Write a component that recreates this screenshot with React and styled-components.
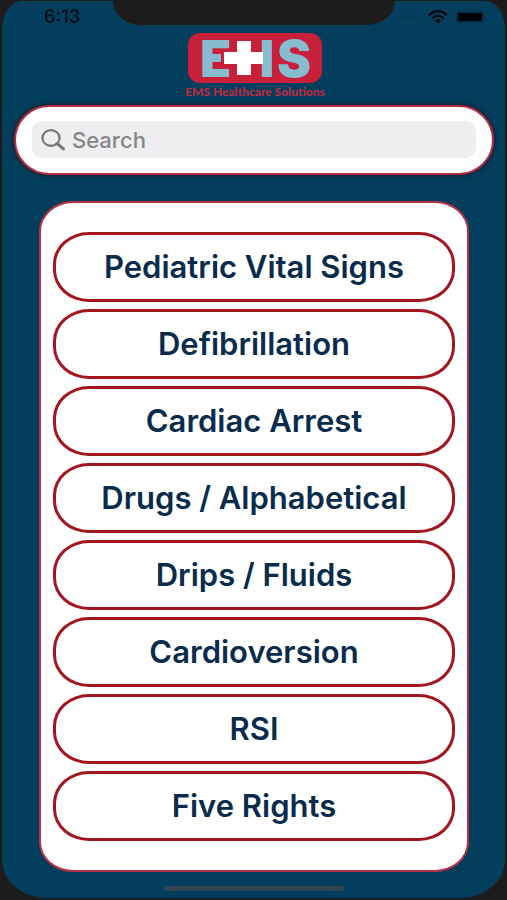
import React, { useState } from "react";
import styled, { createGlobalStyle } from "styled-components";

const MENU = [
  "Pediatric Vital Signs",
  "Defibrillation",
  "Cardiac Arrest",
  "Drugs / Alphabetical",
  "Drips / Fluids",
  "Cardioversion",
  "RSI",
  "Five Rights"
];

const WifiIcon = () => (
  <svg width="20" height="14" viewBox="0 0 20 14" aria-hidden="true">
    <g fill="none" stroke="#02080d" strokeWidth="2.4">
      <path d="M1.2 5.2C6-.2 14-.2 18.8 5.2" />
      <path d="M4.6 8.2c3-3.2 7.8-3.2 10.8 0" />
    </g>
    <path d="M7.2 10.4c1.6-1.5 4-1.5 5.6 0L10 13.4z" fill="#02080d" />
  </svg>
);

const BatteryIcon = () => (
  <svg width="31" height="12" viewBox="0 0 31 12" aria-hidden="true">
    <rect x="0" y="0" width="28" height="12" rx="3" fill="#04304a" />
    <rect x="2" y="2" width="24" height="8" rx="1" fill="#010406" />
    <path d="M29 4v4c1.6-.6 1.6-3.4 0-4z" fill="#04304a" />
  </svg>
);

const SearchIcon = () => (
  <svg width="24" height="22" viewBox="0 0 24 22" aria-hidden="true">
    <g fill="none" stroke="#77777b">
      <ellipse cx="10" cy="9" rx="8.6" ry="7.8" strokeWidth="2.2" />
      <path d="M16 14.5l6.4 5.4" strokeWidth="3" strokeLinecap="round" />
    </g>
  </svg>
);

const Logo = () => (
  <LogoMark viewBox="0 0 134 50" role="img" aria-label="EHS">
    <rect width="134" height="50" rx="12" fill="#c8203a" />
    <g fill="#86bccd" fontFamily="Inter, sans-serif" fontWeight="900" fontSize="51">
      <text x="12" y="44">E</text>
      <text x="48" y="44">H</text>
      <text x="89" y="44">S</text>
    </g>
    <path d="M46 2h19v15h8v16h-8v15H46V34H33V16h13z" fill="#c8203a" />
    <path d="M49 8h14v11h12v12H63v11H49V31H36V19h13z" fill="#fff" />
  </LogoMark>
);

const App = () => {
  const [query, setQuery] = useState("");

  return (
    <>
      <GlobalStyle />
      <Phone>
        <StatusBar>
          <Time>6:13</Time>
          <Notch />
          <StatusIcons>
            <SignalDots>····</SignalDots>
            <WifiIcon />
            <BatteryIcon />
          </StatusIcons>
        </StatusBar>
        <Header>
          <Logo />
          <Tagline>EMS Healthcare Solutions</Tagline>
        </Header>
        <SearchCard>
          <SearchField>
            <SearchIcon />
            <SearchInput
              type="text"
              aria-label="Search"
              placeholder="Search"
              value={query}
              onChange={e => setQuery(e.target.value)}
            />
          </SearchField>
        </SearchCard>
        <MenuPanel>
          {MENU.map(name => (
            <MenuButton key={name} type="button">
              {name}
            </MenuButton>
          ))}
        </MenuPanel>
        <HomeIndicator />
      </Phone>
    </>
  );
};

export default App;

const GlobalStyle = createGlobalStyle`
  * {
    box-sizing: border-box;
  }
  body {
    margin: 0;
    background: #1c1c1d;
    font-family: Inter, "Liberation Sans", sans-serif;
  }
`;

const Phone = styled.div`
  display: flex;
  flex-direction: column;
  margin: 1px 2px 3px;
  padding-bottom: 7px;
  background: #033f5c;
  border-radius: 20px 20px 44px 44px / 28px 28px 38px 38px;
`;

const StatusBar = styled.div`
  display: grid;
  grid-template-columns: 1fr 282px 1fr;
  height: 32px;
`;

const Time = styled.span`
  padding: 6px 0 0 42px;
  font-size: 18px;
  line-height: 20px;
  font-weight: 600;
  color: #02101a;
`;

const Notch = styled.div`
  height: 24px;
  background: #1c1c1d;
  border-radius: 0 0 28px 28px / 0 0 24px 24px;
`;

const StatusIcons = styled.div`
  display: flex;
  align-items: center;
  justify-content: flex-end;
  gap: 8px;
  height: 32px;
  padding-right: 18px;
`;

const SignalDots = styled.span`
  font-size: 16px;
  color: #04304a;
`;

const Header = styled.header`
  display: flex;
  flex-direction: column;
  align-items: center;
  padding-left: 3px;
`;

const LogoMark = styled.svg`
  width: 134px;
  height: 50px;
  overflow: visible;
`;

const Tagline = styled.p`
  margin: 2px 0 6px;
  font-family: Lato, sans-serif;
  font-size: 12px;
  line-height: 14px;
  font-weight: 900;
  color: #b92a42;
`;

const SearchCard = styled.div`
  margin: 0 11px 0 12px;
  padding: 14px 16px 15px;
  background: #fff;
  border: 2px solid #b02a40;
  border-radius: 36px;
  box-shadow: 0 0 5px 1px #1c1b2c;
`;

const SearchField = styled.label`
  display: flex;
  align-items: center;
  gap: 7px;
  height: 37px;
  padding-left: 9px;
  background: #eeeef0;
  border-radius: 10px;
`;

const SearchInput = styled.input`
  flex: 1;
  min-width: 0;
  padding: 0;
  border: none;
  outline: none;
  background: transparent;
  font-family: inherit;
  font-size: 22px;
  line-height: 28px;
  font-weight: 500;
  color: #3c3c43;
  &::placeholder {
    color: #86868a;
    opacity: 1;
  }
`;

const MenuPanel = styled.main`
  display: flex;
  flex-direction: column;
  gap: 7px;
  margin: 26px 36px 0 37px;
  padding: 29px 12px;
  background: #fff;
  border: 2px solid #b83046;
  border-radius: 34px / 30px;
`;

const MenuButton = styled.button`
  height: 70px;
  padding: 0 12px;
  background: #fff;
  border: 3px solid #a3151f;
  border-radius: 36px / 32px;
  font-family: inherit;
  font-size: 31px;
  line-height: 36px;
  font-weight: 600;
  color: #092c4c;
  cursor: pointer;
`;

const HomeIndicator = styled.div`
  width: 180px;
  height: 5px;
  margin: 14px auto 0;
  background: #2f4553;
  border-radius: 3px;
`;
